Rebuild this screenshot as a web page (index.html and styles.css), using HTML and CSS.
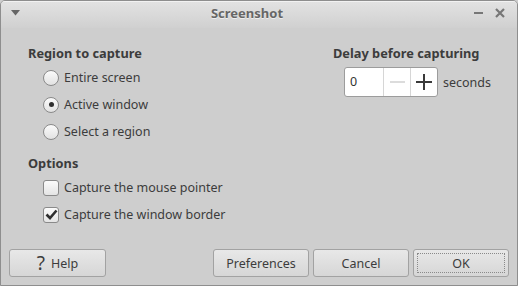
FILE: index.html
```html
<!DOCTYPE html>
<html>
<head>
<meta charset="utf-8">
<link rel="stylesheet" href="styles.css">
</head>
<body>
<div class="window">
  <div class="titlebar">
    <svg class="menu-arrow" width="9" height="6" viewBox="0 0 9 6"><path d="M0 0H9L4.5 5.5Z" fill="#666"/></svg>
    <div class="title">Screenshot</div>
    <div class="controls">
      <span class="minimize"></span>
      <svg class="close" width="10" height="10" viewBox="0 0 10 10"><path d="M1 1L9 9M9 1L1 9" stroke="#777" stroke-width="2.2"/></svg>
    </div>
  </div>
  <div class="main">
    <div class="left">
      <div class="heading">Region to capture</div>
      <div class="row"><span class="radio"></span>Entire screen</div>
      <div class="row"><span class="radio checked"></span>Active window</div>
      <div class="row"><span class="radio"></span>Select a region</div>
      <div class="heading options">Options</div>
      <div class="row"><span class="check"></span>Capture the mouse pointer</div>
      <div class="row"><span class="check">
        <svg width="13" height="11" viewBox="0 0 13 11"><path d="M1.5 5.5L5 9L11.5 1.5" fill="none" stroke="#2f2f2f" stroke-width="2.6"/></svg>
      </span>Capture the window border</div>
    </div>
    <div class="right">
      <div class="heading">Delay before capturing</div>
      <div class="spinrow">
        <div class="spin">
          <div class="entry">0</div>
          <div class="sbtn"><span class="minus"></span></div>
          <div class="sbtn"><span class="plus"></span></div>
        </div>
        <span class="unit">seconds</span>
      </div>
    </div>
  </div>
  <div class="buttons">
    <button class="btn help"><span class="q">?</span>Help</button>
    <div class="spacer"></div>
    <button class="btn">Preferences</button>
    <button class="btn">Cancel</button>
    <button class="btn ok"><span class="focus">OK</span></button>
  </div>
</div>
</body>
</html>
```
FILE: styles.css
```css
html, body {
  margin: 0;
  padding: 0;
  background: #cecece;
}
body {
  font-family: "Noto Sans", "DejaVu Sans", sans-serif;
  font-size: 12.5px;
  color: #3c3c3c;
}
.window {
  width: 518px;
  height: 286px;
  box-sizing: border-box;
  border: 1px solid #8e8e8e;
  border-radius: 5px 5px 0 0;
  background: #cecece;
  display: flex;
  flex-direction: column;
  overflow: hidden;
}
.titlebar {
  height: 27px;
  flex: none;
  display: flex;
  align-items: center;
  box-sizing: border-box;
  padding-bottom: 5px;
  background: linear-gradient(#e2e2e2, #d0d0d0);
  border-top: 1px solid #f2f2f2;
}
.menu-arrow {
  margin-left: 10px;
}
.title {
  flex: 1;
  text-align: center;
  font-weight: bold;
  color: #666;
  font-size: 13px;
  line-height: 16px;
  text-shadow: 0 1px 0 rgba(255,255,255,0.6);
}
.controls {
  display: flex;
  align-items: center;
  gap: 12px;
  margin-right: 12px;
}
.minimize {
  width: 9px;
  height: 2px;
  background: #777;
}
.main {
  flex: 1;
  display: flex;
  padding: 16px 0 0 27px;
}
.left {
  width: 305px;
}
.heading {
  font-weight: bold;
  font-size: 12.8px;
  line-height: 18px;
  color: #3c3c3c;
}
.heading.options {
  margin-top: 9px;
}
.left .heading:first-child {
  margin-bottom: 2px;
}
.row {
  height: 27px;
  display: flex;
  align-items: center;
  padding-left: 15px;
}
.options + .row {
  margin-top: 2px;
}
.radio {
  width: 14px;
  height: 14px;
  border: 1px solid #8a8a8a;
  border-radius: 50%;
  background: linear-gradient(#fbfbfb, #e2e2e2);
  margin-right: 5px;
  display: flex;
  align-items: center;
  justify-content: center;
  flex: none;
}
.radio.checked::after {
  content: "";
  width: 5px;
  height: 5px;
  border-radius: 50%;
  background: #2f2f2f;
}
.check {
  width: 14px;
  height: 14px;
  border: 1px solid #8a8a8a;
  border-radius: 3px;
  background: linear-gradient(#fbfbfb, #e4e4e4);
  margin-right: 5px;
  display: flex;
  align-items: center;
  justify-content: center;
  flex: none;
}
.right .heading {
  margin-bottom: 5px;
}
.spinrow {
  display: flex;
  align-items: center;
  padding-left: 11px;
}
.spin {
  display: flex;
  height: 30px;
  box-sizing: border-box;
  border: 1px solid #9c9c9c;
  border-radius: 3px;
  background: #fff;
  overflow: hidden;
}
.entry {
  width: 33px;
  padding-left: 5px;
  line-height: 28px;
  color: #333;
}
.sbtn {
  width: 26px;
  border-left: 1px solid #d6d6d6;
  display: flex;
  align-items: center;
  justify-content: center;
}
.minus {
  width: 15px;
  height: 2px;
  background: #dcdcdc;
}
.plus {
  width: 16px;
  height: 16px;
  position: relative;
}
.plus::before, .plus::after {
  content: "";
  position: absolute;
  background: #3a3a3a;
}
.plus::before {
  left: 0;
  top: 7px;
  width: 16px;
  height: 2px;
}
.plus::after {
  left: 7px;
  top: 0;
  width: 2px;
  height: 16px;
}
.unit {
  margin-left: 5px;
  color: #3c3c3c;
}
.buttons {
  flex: none;
  display: flex;
  gap: 4px;
  padding: 0 8px 8px 8px;
}
.spacer {
  flex: 1;
}
.btn {
  font-family: inherit;
  font-size: 12.5px;
  color: #3c3c3c;
  height: 28px;
  width: 96px;
  box-sizing: border-box;
  border: 1px solid #a2a2a2;
  border-radius: 3px;
  background: linear-gradient(#e8e8e8, #d6d6d6);
  padding: 0;
  display: flex;
  align-items: center;
  justify-content: center;
}
.btn.help {
  width: 97px;
}
.q {
  font-size: 19px;
  margin-right: 6px;
  line-height: 18px;
}
.ok {
  padding: 3px;
}
.focus {
  flex: 1;
  align-self: stretch;
  border: 1px dotted #8a8a8a;
  display: flex;
  align-items: center;
  justify-content: center;
}
```
